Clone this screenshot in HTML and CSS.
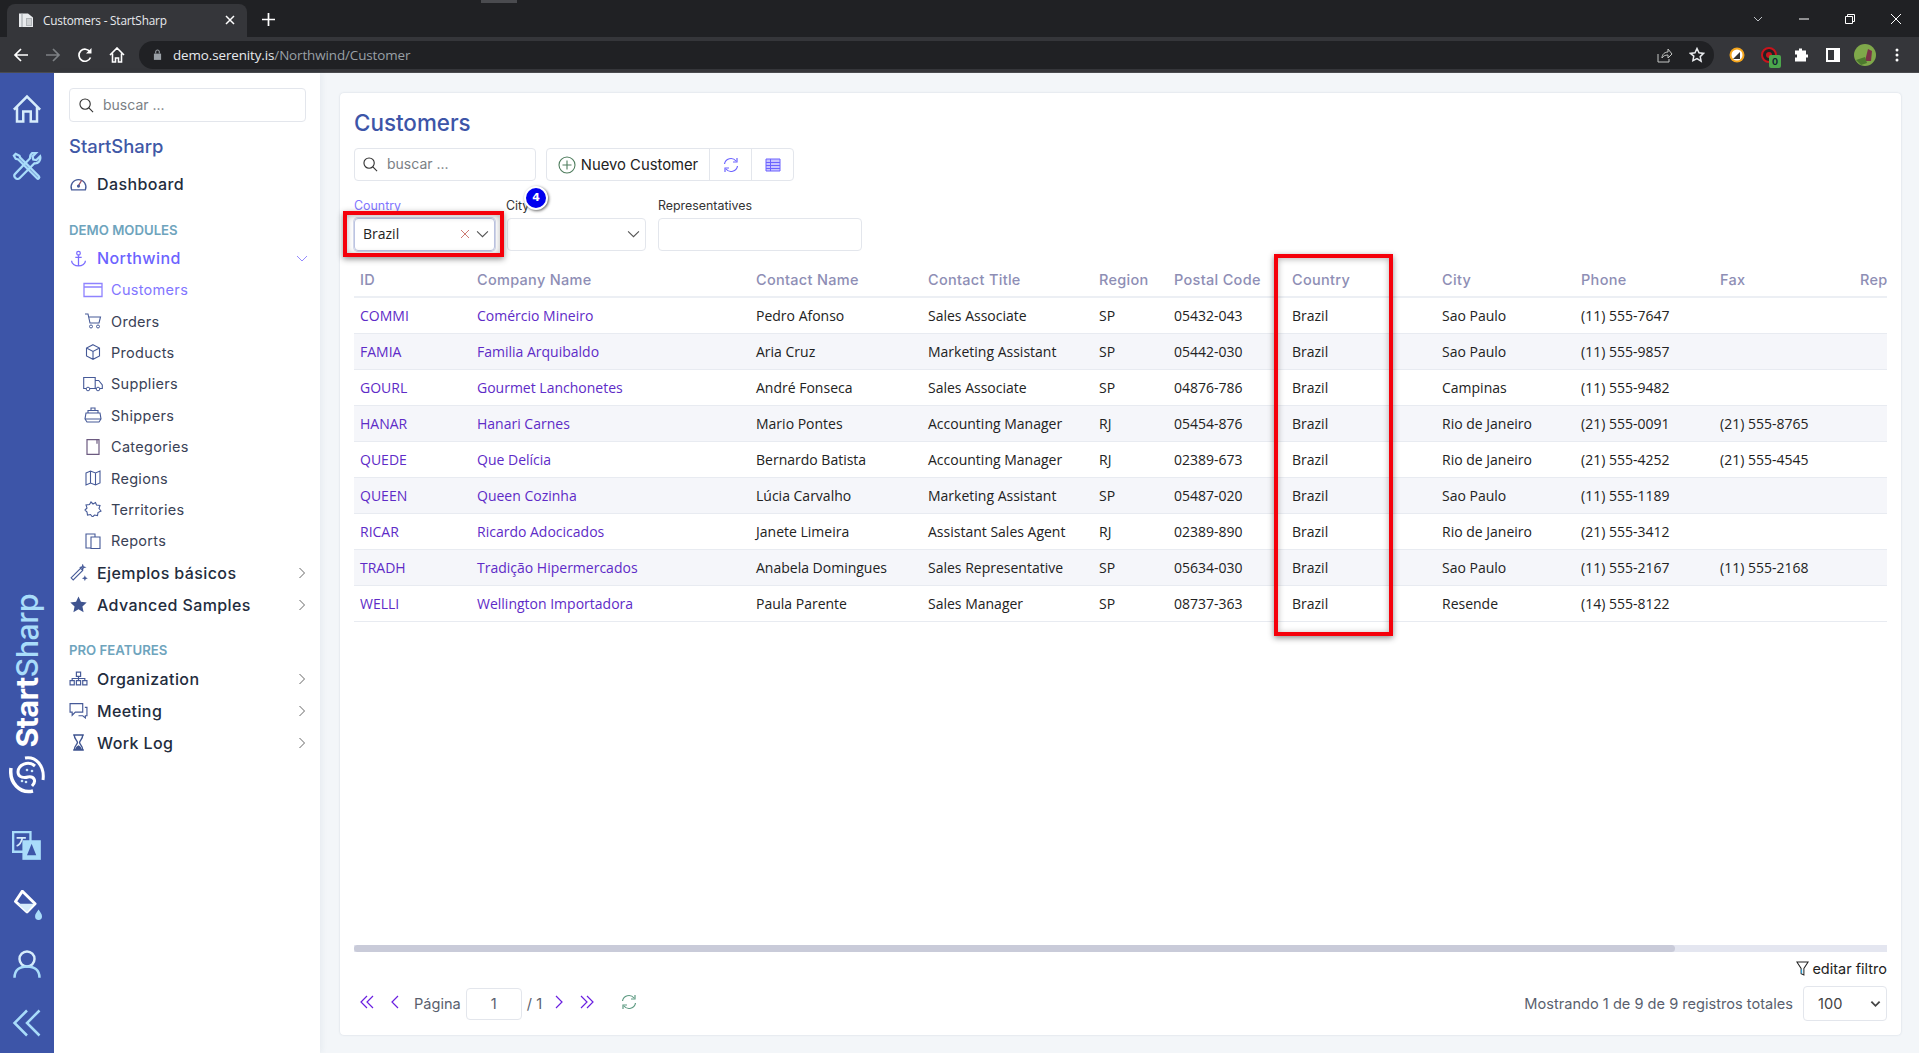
FILE: index.html
```html
<!DOCTYPE html>
<html lang="es">
<head>
<meta charset="utf-8">
<title>Customers - StartSharp</title>
<link rel="stylesheet" href="styles.css">
</head>
<body>
<div class="browser-tabs">
  <div class="tab">
    <svg class="fav" viewBox="0 0 16 16"><path d="M1 1.500h9l5 4V15H1z" fill="#e8eaed"/><path d="M4 1.500v13.500" stroke="#9aa0a6" stroke-width="1"/><path d="M8 6h6v8H8z" fill="#b0b4b8"/><path d="M9 8h4M9 10h4M9 12h4" stroke="#fff" stroke-width=".8"/></svg>
    <span class="tab-title">Customers - StartSharp</span>
    <svg class="tab-x" viewBox="0 0 10 10"><path d="M1 1l8 8M9 1l-8 8" stroke="#fff" stroke-width="1.5"/></svg>
  </div>
  <svg class="tab-plus" viewBox="0 0 12 12"><path d="M6 0v12M0 6h12" stroke="#fff" stroke-width="1.6"/></svg>
  <div class="drag-mark"></div>
  <div class="win-controls">
    <svg viewBox="0 0 12 12"><path d="M2 4l4 4 4-4" fill="none" stroke="#bdc1c6"/></svg>
    <svg viewBox="0 0 12 12"><path d="M1 6h10" stroke="#fff"/></svg>
    <svg viewBox="0 0 12 12"><path d="M1.500 3.500h7v7h-7zM3.500 3.500v-2h7v7h-2" fill="none" stroke="#fff"/></svg>
    <svg viewBox="0 0 12 12"><path d="M1 1l10 10M11 1L1 11" stroke="#fff"/></svg>
  </div>
</div>
<div class="browser-bar">
  <svg class="nav-ic" viewBox="0 0 16 16"><path d="M15 8H2M8 2L2 8l6 6" fill="none" stroke="#fff" stroke-width="1.7"/></svg>
  <svg class="nav-ic" viewBox="0 0 16 16"><path d="M1 8h13M8 2l6 6-6 6" fill="none" stroke="#7d8084" stroke-width="1.7"/></svg>
  <svg class="nav-ic" viewBox="0 0 16 16"><path d="M13.500 10.500A6 6 0 1 1 13 5" fill="none" stroke="#fff" stroke-width="1.7"/><path d="M14.500 1v5.500H9z" fill="#fff"/></svg>
  <svg class="nav-ic" viewBox="0 0 16 16"><path d="M1 8l7-7 7 7M3.500 6.500V15h3v-4h3v4h3V6.500" fill="none" stroke="#fff" stroke-width="1.6"/></svg>
  <div class="omnibox">
    <svg class="lock" viewBox="0 0 10 12"><path d="M1 5h8v7H1z" fill="#9aa0a6"/><path d="M3 5V3a2 2 0 0 1 4 0v2" fill="none" stroke="#9aa0a6" stroke-width="1.2"/></svg>
    <span class="url"><b>demo.serenity.is</b>/Northwind/Customer</span>
    <svg class="omni-ic first" viewBox="0 0 16 16"><path d="M1 7v8h11v-3M5 11c0-4 3-6 6-6V2l4 5-4 4V8c-3 0-5 1-6 3z" fill="none" stroke="#c4c7c5"/></svg>
    <svg class="omni-ic" viewBox="0 0 16 16"><path d="M8 1.500l2 4.300 4.600.6-3.400 3.200.9 4.600L8 11.500l-4.100 2.200.9-4.600L1.400 6.400 6 5.800z" fill="none" stroke="#e8eaed" stroke-width="1.500"/></svg>
  </div>
  <div class="ext-row">
    <svg class="ext" viewBox="0 0 16 16"><circle cx="8" cy="8" r="7.500" fill="#f4a51c"/><circle cx="8" cy="8" r="5.500" fill="#fff"/><path d="M4 12l7-7v7z" fill="#333"/></svg>
    <span class="ext-badged">
      <svg class="ext" viewBox="0 0 16 16"><circle cx="8" cy="8" r="7" fill="#222" stroke="#c9141c" stroke-width="2"/><circle cx="8" cy="8" r="3" fill="#c9141c"/></svg>
      <span class="zero">0</span>
    </span>
    <svg class="ext" viewBox="0 0 16 16"><path d="M6 1.500h3v2h4v4h2v3h-2v4H2v-4h2v-3H2v-4h4z" fill="#fff"/></svg>
    <svg class="ext" viewBox="0 0 16 16"><path d="M1 1h14v14H1z" fill="#fff"/><path d="M3 3h6v10H3z" fill="#35363a"/></svg>
    <svg class="ext avatar" viewBox="0 0 22 22"><circle cx="11" cy="11" r="11" fill="#7fa84a"/><path d="M11 17l3-12 4 2-1 10z" fill="#7b3248"/><path d="M2 16l9-3 2 6-6 2z" fill="#4d7a2e"/></svg>
    <svg class="ext" viewBox="0 0 16 16"><circle cx="8" cy="3" r="1.500" fill="#fff"/><circle cx="8" cy="8" r="1.500" fill="#fff"/><circle cx="8" cy="13" r="1.500" fill="#fff"/></svg>
  </div>
</div>

<div class="app">
  <nav class="rail">
    <svg class="rail-ic" viewBox="0 0 24 24"><path d="M1.500 12.500L12 2l10.500 10.500M4 10.500V22h5v-8h6v8h5V10.500" fill="none" stroke="#d6ecfb" stroke-width="2"/></svg>
    <svg class="rail-ic" viewBox="0 0 24 24"><path d="M3 1.500L1.500 3 3 5.500l2 .5 15 15c1 1 2.500-.5 1.500-1.500L6.500 4.500 6 3z" fill="none" stroke="#a9dcfa" stroke-width="1.800"/><path d="M22.500 3.500l-3 3-2.500-.5-.5-2.500 3-3c-3-.8-5.500 1.500-5 4.500L2.500 17.500c-2 2 1.500 5.500 3.500 3.500L18 9c3 .5 5.300-2.500 4.500-5.500z" fill="none" stroke="#a9dcfa" stroke-width="1.800"/></svg>
    <div class="brand">
      <span class="brand-text"><span class="brand-start">Start</span><span class="brand-sharp">Sharp</span></span>
      <svg class="swirl" viewBox="0 0 36 38">
        <path d="M16 2C26 0 36 9 34 24" fill="none" stroke="#fff" stroke-width="3"/>
        <path d="M2 12C0 27 11 38 24 35" fill="none" stroke="#fff" stroke-width="3.500"/>
        <path d="M26 10C19 4 9 9 9 16c0 6 7 6 10 5 6-1 9 4 4 9" fill="none" stroke="#fff" stroke-width="3"/>
        <circle cx="18" cy="14" r="1.300" fill="#cfe8f8"/><circle cx="23" cy="15" r="1.300" fill="#cfe8f8"/><circle cx="13" cy="25" r="1.300" fill="#cfe8f8"/><circle cx="17" cy="26" r="1.300" fill="#cfe8f8"/>
      </svg>
    </div>
    <div class="rail-bottom">
      <svg class="rail-ic" viewBox="0 0 26 26"><path d="M1 1h15v17H1z" fill="none" stroke="#a9dcfa" stroke-width="2"/><path d="M9 8h16v17H9z" fill="#a9dcfa"/><path d="M17 11l-4 10h8z" fill="#3d55a8"/><path d="M4 6h8M9 6c-1 4-2 6-5 7" fill="none" stroke="#d6ecfb" stroke-width="1.500"/></svg>
      <svg class="rail-ic" viewBox="0 0 26 26"><path d="M9 1l11 11-7 7L3 10z" fill="#3d55a8" stroke="#fff" stroke-width="2.500" stroke-linejoin="round"/><path d="M5 12h14l-6 7z" fill="#d6ecfb"/><path d="M23 17c-2 3-3 4-3 6a3 3 0 0 0 6 0c0-2-1-3-3-6z" fill="#a9dcfa"/></svg>
      <svg class="rail-ic" viewBox="0 0 24 24"><circle cx="12" cy="8" r="6" fill="none" stroke="#d6ecfb" stroke-width="2"/><path d="M2 23c0-6 4-9 10-9s10 3 10 9" fill="none" stroke="#a9dcfa" stroke-width="2"/></svg>
      <svg class="rail-ic" viewBox="0 0 24 24"><path d="M12 2L2 12l10 10M22 2L12 12l10 10" fill="none" stroke="#a9dcfa" stroke-width="2"/></svg>
    </div>
  </nav>

  <aside class="sidebar">
    <div class="search side-search">
      <svg class="search-ic" viewBox="0 0 16 16"><circle cx="6.500" cy="6.500" r="5.500" fill="none" stroke="#333" stroke-width="1.200"/><path d="M10.500 10.500L15 15" stroke="#333" stroke-width="1.200"/></svg>
      <span class="placeholder">buscar ...</span>
    </div>
    <div class="side-title">StartSharp</div>
    <div class="menu-row dash">
      <svg class="m-ic" viewBox="0 0 16 16"><path d="M1.500 13a7 7 0 1 1 13 0z" fill="none" stroke="#465a98" stroke-width="1.200"/><path d="M8 9l3-5" stroke="#a05060" stroke-width="1.200"/><circle cx="8" cy="9.500" r="1.500" fill="#465a98"/></svg>
      <span>Dashboard</span>
    </div>
    <div class="section">DEMO MODULES</div>
    <div class="menu-row active">
      <svg class="m-ic" viewBox="0 0 16 16"><circle cx="8" cy="3" r="1.700" fill="none" stroke="#7a6cff" stroke-width="1.200"/><path d="M8 5v10M5 7h6M1.500 10c0 3 3 5 6.500 5s6.500-2 6.500-5" fill="none" stroke="#7a6cff" stroke-width="1.200"/></svg>
      <span>Northwind</span>
      <svg class="chev" viewBox="0 0 12 12"><path d="M1 4l5 5 5-5" fill="none" stroke="#7a6cff" stroke-width=".8"/></svg>
    </div>
    <ul class="sub">
      <li class="sub-row current"><svg class="s-ic" viewBox="0 0 20 16"><path d="M1 1.500h18v13H1zM1 5h18" fill="none" stroke="#8f83ff" stroke-width="1.300"/></svg><span>Customers</span></li>
      <li class="sub-row"><svg class="s-ic" viewBox="0 0 20 16"><path d="M2 1h3l2 9h9l1.500-6H5.500" fill="none" stroke="#465a98" stroke-width="1.100"/><circle cx="8" cy="13.500" r="1.500" fill="none" stroke="#465a98"/><circle cx="15" cy="13.500" r="1.500" fill="none" stroke="#465a98"/></svg><span>Orders</span></li>
      <li class="sub-row"><svg class="s-ic" viewBox="0 0 20 16"><path d="M10 .7l6.500 3.300v8L10 15.300 3.500 12V4zM3.500 4L10 7.500 16.500 4M10 7.500v7.800" fill="none" stroke="#465a98" stroke-width="1.100"/></svg><span>Products</span></li>
      <li class="sub-row"><svg class="s-ic" viewBox="0 0 20 16"><path d="M3 12.500H.7V1.500h11.500v11H7M12.200 4.500h3.500l3.600 4.500v3.500H17M12.200 12.500h1" fill="none" stroke="#465a98" stroke-width="1.100"/><circle cx="5" cy="13" r="1.800" fill="none" stroke="#465a98"/><circle cx="15" cy="13" r="1.800" fill="none" stroke="#465a98"/></svg><span>Suppliers</span></li>
      <li class="sub-row"><svg class="s-ic" viewBox="0 0 20 16"><path d="M3 6h14l1 6-2 3H4l-2-3zM5 6V3.500h10V6M8 3.500V1h4v2.500M2 12h16" fill="none" stroke="#465a98" stroke-width="1.100"/></svg><span>Shippers</span></li>
      <li class="sub-row"><svg class="s-ic" viewBox="0 0 20 16"><path d="M4 .7h12v14.600H4zM14 .7v4" fill="none" stroke="#6c5a80" stroke-width="1.200"/></svg><span>Categories</span></li>
      <li class="sub-row"><svg class="s-ic" viewBox="0 0 20 16"><path d="M3 3l4.500-2 5 2L17 1v12l-4.500 2-5-2L3 15zM7.500 1v12M12.500 3v12" fill="none" stroke="#465a98" stroke-width="1.100"/></svg><span>Regions</span></li>
      <li class="sub-row"><svg class="s-ic" viewBox="0 0 20 16"><path d="M8 1l2 2 2.500-1.500L13.500 4l3.500.5-1 3L18 10l-3 1.500-.5 3-3-.5-2 2-2-2.500-3 .5-.5-3L2 9l2-2-1-3 3.500-.5z" fill="none" stroke="#465a98" stroke-width="1.100"/></svg><span>Territories</span></li>
      <li class="sub-row"><svg class="s-ic" viewBox="0 0 20 16"><path d="M8 15H3V1h9v2.500M8 4h9v11.500H8z" fill="none" stroke="#465a98" stroke-width="1.100"/></svg><span>Reports</span></li>
    </ul>
    <div class="menu-row"><svg class="m-ic" viewBox="0 0 16 16"><path d="M1 13L10 4l2 2-9 9zM12 1l.5 1.500L14 3l-1.500.5L12 5l-.5-1.500L10 3l1.500-.5zM14 12l.4 1 1 .4-1 .4-.4 1-.4-1-1-.4 1-.4z" fill="none" stroke="#465a98"/></svg><span>Ejemplos básicos</span><svg class="chev" viewBox="0 0 12 12"><path d="M3.500 1l5 5-5 5" fill="none" stroke="#555" stroke-width=".9"/></svg></div>
    <div class="menu-row"><svg class="m-ic" viewBox="0 0 16 16"><path d="M8 .5l2.300 5 5.400.6-4 3.700 1.100 5.400L8 12.500l-4.800 2.700 1.100-5.400-4-3.700 5.400-.6z" fill="#3f5490"/></svg><span>Advanced Samples</span><svg class="chev" viewBox="0 0 12 12"><path d="M3.500 1l5 5-5 5" fill="none" stroke="#555" stroke-width=".9"/></svg></div>
    <div class="section second">PRO FEATURES</div>
    <div class="menu-row"><svg class="m-ic" viewBox="0 0 18 16"><path d="M7 2h4v4H7zM1 10h4v4H1zM7 10h4v4H7zM13 10h4v4h-4zM9 6v4M3 10V8h12v2" fill="none" stroke="#465a98" stroke-width="1.100"/></svg><span>Organization</span><svg class="chev" viewBox="0 0 12 12"><path d="M3.500 1l5 5-5 5" fill="none" stroke="#555" stroke-width=".9"/></svg></div>
    <div class="menu-row"><svg class="m-ic" viewBox="0 0 18 16"><path d="M1 1.500h12v8H6l-3 3v-3H1zM15 5h2v8h-1.500v2L13 13H9" fill="none" stroke="#465a98" stroke-width="1.100"/></svg><span>Meeting</span><svg class="chev" viewBox="0 0 12 12"><path d="M3.500 1l5 5-5 5" fill="none" stroke="#555" stroke-width=".9"/></svg></div>
    <div class="menu-row"><svg class="m-ic" viewBox="0 0 16 16"><path d="M3 1h10M3 15h10M4 1c0 4 3 5 3 7s-3 3-3 7M12 1c0 4-3 5-3 7s3 3 3 7" fill="none" stroke="#3f5490" stroke-width="1.300"/><path d="M4.500 15c1-3 2-3.500 3.500-4.500 1.500 1 2.500 1.500 3.500 4.500z" fill="#3f5490"/></svg><span>Work Log</span><svg class="chev" viewBox="0 0 12 12"><path d="M3.500 1l5 5-5 5" fill="none" stroke="#555" stroke-width=".9"/></svg></div>
  </aside>

  <main class="content">
    <section class="card">
      <h1 class="page-title">Customers</h1>
      <div class="toolbar">
        <div class="search grid-search">
          <svg class="search-ic" viewBox="0 0 16 16"><circle cx="6.500" cy="6.500" r="5.500" fill="none" stroke="#333" stroke-width="1.200"/><path d="M10.500 10.500L15 15" stroke="#333" stroke-width="1.200"/></svg>
          <span class="placeholder">buscar ...</span>
        </div>
        <div class="btn-group">
          <div class="btn btn-new"><svg class="plus-ic" viewBox="0 0 18 18"><circle cx="9" cy="9" r="8" fill="none" stroke="#4f7d5e" stroke-width="1.100"/><path d="M9 4.500v9M4.500 9h9" stroke="#4f7d5e" stroke-width="1.100"/></svg><span>Nuevo Customer</span></div>
          <div class="btn btn-ic"><svg class="tool-ic" viewBox="0 0 16 16"><path d="M1.500 7A6.500 6.500 0 0 1 13 4M14.500 9A6.500 6.500 0 0 1 3 12" fill="none" stroke="#6c63ff" stroke-width="1.200"/><path d="M14 1v4h-4M2 15v-4h4" fill="none" stroke="#6c63ff" stroke-width="1.200"/></svg></div>
          <div class="btn btn-ic"><svg class="tool-ic" viewBox="0 0 16 16"><path d="M1 2h14v12H1z" fill="#c9c4ff" stroke="#6c63ff"/><path d="M1 5.500h14M1 8.500h14M1 11.500h14M5.500 2v12" stroke="#6c63ff"/></svg></div>
        </div>
      </div>
      <div class="filters">
        <div class="filter">
          <label class="f-label f-on">Country</label>
          <div class="select select-on"><span>Brazil</span><svg class="sel-x" viewBox="0 0 10 10"><path d="M1 1l8 8M9 1l-8 8" stroke="#c05a50" stroke-width=".8"/></svg><svg class="sel-chev" viewBox="0 0 12 12"><path d="M1 4l5 5 5-5" fill="none" stroke="#555"/></svg></div>
        </div>
        <div class="filter">
          <label class="f-label">City</label>
          <div class="select"><svg class="sel-chev" viewBox="0 0 12 12"><path d="M1 4l5 5 5-5" fill="none" stroke="#555"/></svg></div>
        </div>
        <div class="filter">
          <label class="f-label">Representatives</label>
          <div class="select"></div>
        </div>
      </div>

      <div class="grid-wrap">
        <table class="grid">
          <colgroup>
            <col class="c1"><col class="c2"><col class="c3"><col class="c4"><col class="c5"><col class="c6"><col class="c7"><col class="c8"><col class="c9"><col class="c10"><col class="c11">
          </colgroup>
          <thead>
            <tr><th>ID</th><th>Company Name</th><th>Contact Name</th><th>Contact Title</th><th>Region</th><th>Postal Code</th><th>Country</th><th>City</th><th>Phone</th><th>Fax</th><th>Rep</th></tr>
          </thead>
          <tbody>
            <tr><td><a>COMMI</a></td><td><a>Comércio Mineiro</a></td><td>Pedro Afonso</td><td>Sales Associate</td><td>SP</td><td>05432-043</td><td>Brazil</td><td>Sao Paulo</td><td>(11) 555-7647</td><td></td><td></td></tr>
            <tr><td><a>FAMIA</a></td><td><a>Familia Arquibaldo</a></td><td>Aria Cruz</td><td>Marketing Assistant</td><td>SP</td><td>05442-030</td><td>Brazil</td><td>Sao Paulo</td><td>(11) 555-9857</td><td></td><td></td></tr>
            <tr><td><a>GOURL</a></td><td><a>Gourmet Lanchonetes</a></td><td>André Fonseca</td><td>Sales Associate</td><td>SP</td><td>04876-786</td><td>Brazil</td><td>Campinas</td><td>(11) 555-9482</td><td></td><td></td></tr>
            <tr><td><a>HANAR</a></td><td><a>Hanari Carnes</a></td><td>Mario Pontes</td><td>Accounting Manager</td><td>RJ</td><td>05454-876</td><td>Brazil</td><td>Rio de Janeiro</td><td>(21) 555-0091</td><td>(21) 555-8765</td><td></td></tr>
            <tr><td><a>QUEDE</a></td><td><a>Que Delícia</a></td><td>Bernardo Batista</td><td>Accounting Manager</td><td>RJ</td><td>02389-673</td><td>Brazil</td><td>Rio de Janeiro</td><td>(21) 555-4252</td><td>(21) 555-4545</td><td></td></tr>
            <tr><td><a>QUEEN</a></td><td><a>Queen Cozinha</a></td><td>Lúcia Carvalho</td><td>Marketing Assistant</td><td>SP</td><td>05487-020</td><td>Brazil</td><td>Sao Paulo</td><td>(11) 555-1189</td><td></td><td></td></tr>
            <tr><td><a>RICAR</a></td><td><a>Ricardo Adocicados</a></td><td>Janete Limeira</td><td>Assistant Sales Agent</td><td>RJ</td><td>02389-890</td><td>Brazil</td><td>Rio de Janeiro</td><td>(21) 555-3412</td><td></td><td></td></tr>
            <tr><td><a>TRADH</a></td><td><a>Tradição Hipermercados</a></td><td>Anabela Domingues</td><td>Sales Representative</td><td>SP</td><td>05634-030</td><td>Brazil</td><td>Sao Paulo</td><td>(11) 555-2167</td><td>(11) 555-2168</td><td></td></tr>
            <tr><td><a>WELLI</a></td><td><a>Wellington Importadora</a></td><td>Paula Parente</td><td>Sales Manager</td><td>SP</td><td>08737-363</td><td>Brazil</td><td>Resende</td><td>(14) 555-8122</td><td></td><td></td></tr>
          </tbody>
        </table>
      </div>

      <div class="hscroll"><div class="hthumb"></div></div>
      <div class="edit-filter">
        <svg class="funnel" viewBox="0 0 14 16"><path d="M1 1h12L8.500 8v7l-3-1.500V8z" fill="none" stroke="#222" stroke-width="1.100"/><path d="M6 9v4" stroke="#2a9fd6" stroke-width="1.200"/></svg>
        <span>editar filtro</span>
      </div>
      <div class="pager">
        <svg class="pg-ic dbl" viewBox="0 0 14 14"><path d="M7 1L1 7l6 6M13 1L7 7l6 6" fill="none" stroke="#6a1fe0" stroke-width="1.200"/></svg>
        <svg class="pg-ic sgl prev" viewBox="0 0 9 14"><path d="M8 1L2 7l6 6" fill="none" stroke="#6a1fe0" stroke-width="1.200"/></svg>
        <span class="pg-label">Página</span>
        <div class="pg-input">1</div>
        <span class="pg-total">/ 1</span>
        <svg class="pg-ic sgl next" viewBox="0 0 9 14"><path d="M1 1l6 6-6 6" fill="none" stroke="#6a1fe0" stroke-width="1.200"/></svg>
        <svg class="pg-ic dbl last" viewBox="0 0 14 14"><path d="M1 1l6 6-6 6M7 1l6 6-6 6" fill="none" stroke="#6a1fe0" stroke-width="1.200"/></svg>
        <svg class="pg-ic refresh" viewBox="0 0 16 16"><path d="M1.500 7A6.500 6.500 0 0 1 13 4M14.500 9A6.500 6.500 0 0 1 3 12" fill="none" stroke="#5d9a82" stroke-width="1.200"/><path d="M14 1v4h-4M2 15v-4h4" fill="none" stroke="#5d9a82" stroke-width="1.200"/></svg>
        <span class="pg-status">Mostrando 1 de 9 de 9 registros totales</span>
        <div class="pg-size"><span>100</span><svg class="size-chev" viewBox="0 0 12 12"><path d="M1.500 4l4.500 4.500L10.500 4" fill="none" stroke="#444" stroke-width="2"/></svg></div>
      </div>

      <div class="mark mark-filter"></div>
      <div class="mark mark-col"></div>
      <div class="badge">4</div>
    </section>
  </main>
</div>
</body>
</html>
```
FILE: styles.css
```css
* { box-sizing: border-box; }
html, body { margin: 0; height: 100%; overflow: hidden; }
body { display: flex; flex-direction: column; height: 1053px; font-family: "Inter", "Noto Sans", sans-serif; background: #f3f6f9; color: #222; }

/* browser chrome */
.browser-tabs { height: 37px; flex: none; background: #202124; display: flex; align-items: flex-end; position: relative; padding-left: 7px; }
.tab { width: 240px; height: 33px; background: #35363a; border-radius: 8px 8px 0 0; display: flex; align-items: center; padding: 0 12px 2px 11px; color: #e8eaed; font-family: "Open Sans", sans-serif; font-size: 11.800px; }
.fav { width: 16px; height: 16px; flex: none; }
.tab-title { margin-left: 9px; flex: 1; letter-spacing: -.2px; }
.tab-x { width: 10px; height: 10px; }
.tab-plus { width: 13px; height: 13px; margin: 0 0 11px 15px; }
.drag-mark { position: absolute; left: 481px; top: 0; width: 36px; height: 3px; background: #4a4b4f; }
.win-controls { margin-left: auto; align-self: center; display: flex; gap: 34px; padding-right: 17px; }
.win-controls svg { width: 12px; height: 12px; }
.browser-bar { height: 36px; flex: none; background: #35363a; border-bottom: 1px solid #4a4b4f; display: flex; align-items: center; padding-left: 13px; gap: 16px; }
.nav-ic { width: 16px; height: 16px; flex: none; }
.omnibox { margin-left: -2px; width: 1575px; height: 28px; flex: none; background: #202124; border-radius: 14px; display: flex; align-items: center; padding: 0 9px 0 14px; }
.lock { width: 9px; height: 11px; flex: none; }
.url { margin-left: 11px; color: #9aa0a6; font-family: "Open Sans", sans-serif; font-size: 13.400px; letter-spacing: -.1px; }
.url b { color: #e8eaed; font-weight: 400; }
.omni-ic { width: 16px; height: 16px; }
.omni-ic.first { margin-left: auto; margin-right: 16px; }
.ext-row { margin-left: -1px; display: flex; align-items: center; gap: 16px; }
.ext { width: 16px; height: 16px; display: block; flex: none; }
.avatar { width: 22px; height: 22px; margin: 0 -3px; }
.ext-badged { position: relative; display: block; }
.zero { position: absolute; left: 8px; top: 8px; width: 12px; height: 13px; border-radius: 2px; background: #4ca64c; color: #123; font-size: 9px; line-height: 13px; text-align: center; font-weight: 700; }

/* app shell */
.app { flex: 1; display: flex; min-height: 0; }
.rail { width: 54px; flex: none; background: #3d55a8; display: flex; flex-direction: column; align-items: center; padding: 21px 0 15px; gap: 28px; }
.rail-ic { width: 30px; height: 30px; flex: none; }
.brand { margin-top: auto; display: flex; flex-direction: column; align-items: center; gap: 8px; }
.brand-text { writing-mode: vertical-rl; transform: rotate(180deg); font-family: "Inter", sans-serif; font-weight: 700; font-size: 30.500px; line-height: 32px; letter-spacing: -.6px; }
.brand-start { color: #fff; }
.brand-sharp { color: #a9dcfa; font-weight: 500; }
.swirl { width: 36px; height: 38px; }
.rail-bottom { display: flex; flex-direction: column; align-items: center; gap: 29px; margin-top: 9px; }

.sidebar { width: 266px; flex: none; background: #fff; box-shadow: 2px 0 6px rgba(40, 60, 100, .06); padding: 15px 14px 0 15px; }
.search { display: flex; align-items: center; background: #fff; border: 1px solid #e3e6ec; border-radius: 4px; }
.side-search { height: 34px; width: 237px; padding-left: 9px; }
.search-ic { width: 15px; height: 15px; flex: none; }
.placeholder { margin: 0 0 2px 9px; color: #7b7f85; font-size: 14px; }
.side-title { height: 28px; margin-top: 10px; line-height: 28px; color: #4058a6; font-size: 18.400px; font-weight: 500; }
.menu-row { display: flex; align-items: center; height: 32px; font-size: 16px; letter-spacing: .4px; color: #232c3d; font-weight: 450; }
.menu-row.dash { margin-top: 8px; }
.menu-row.active { color: #6c63ff; }
.m-ic { width: 19px; height: 17px; flex: none; margin-right: 9px; }
.chev { width: 12px; height: 12px; margin-left: auto; margin-right: -2px; }
.section { height: 18px; margin-top: 21px; margin-bottom: 3px; line-height: 18px; font-size: 13.200px; font-weight: 600; color: #6ea4bd; }
.section.second { margin-bottom: 4px; margin-top: 20px; }
.sub { list-style: none; margin: 0; padding: 0 0 0 14px; }
.sub-row { display: flex; align-items: center; height: 31.400px; font-size: 14.500px; letter-spacing: .3px; color: #3a4256; }
.sub-row.current { color: #8276ff; }
.s-ic { width: 20px; height: 16px; flex: none; margin-right: 8px; }

/* content */
.content { flex: 1; min-width: 0; padding: 20px 18px 18px 20px; }
.card { position: relative; height: 100%; background: #fff; border-radius: 4px; box-shadow: 0 0 2px rgba(40, 60, 100, .18); padding: 15px 14px 14px; display: flex; flex-direction: column; }
.page-title { margin: 0; height: 30px; line-height: 30px; font-size: 22.400px; font-weight: 500; color: #3d55a8; }
.toolbar { display: flex; gap: 10px; margin-top: 10px; height: 33px; }
.grid-search { width: 182px; padding-left: 8px; }
.btn-group { display: flex; border: 1px solid #e3e6ec; border-radius: 4px; }
.btn { display: flex; align-items: center; justify-content: center; border-left: 1px solid #e3e6ec; }
.btn-new { width: 162px; border-left: 0; font-size: 14.800px; color: #222; gap: 5px; white-space: nowrap; }
.plus-ic { width: 18px; height: 18px; flex: none; }
.btn-ic { width: 42px; }
.tool-ic { width: 16px; height: 16px; }
.filters { display: grid; grid-template-columns: 141px 139px 204px; gap: 12px; margin-top: 17px; width: max-content; }
.f-label { display: block; height: 16px; line-height: 16px; margin-bottom: 4px; font-size: 12.400px; color: #333; }
.f-on { color: #8276ff; }
.filter:nth-child(2) .f-label { margin-left: -1px; }
.select { height: 33px; border: 1px solid #e3e6ec; border-radius: 4px; display: flex; align-items: center; justify-content: flex-end; padding: 0 5px 2px 8px; font-family: "Open Sans", sans-serif; font-size: 14px; }
.select span { margin-right: auto; }
.select-on { box-shadow: 0 0 0 1px #d3d8ea; border-color: #bcc4e2; }
.sel-x { width: 10px; height: 10px; margin-right: 6px; }
.sel-chev { width: 13px; height: 13px; }

.grid-wrap { flex: 1; min-height: 0; margin-top: 10px; overflow: hidden; }
.grid { width: 1533px; table-layout: fixed; border-collapse: collapse; }
.c1 { width: 117px; } .c2 { width: 279px; } .c3 { width: 172px; } .c4 { width: 171px; }
.c5 { width: 75px; } .c6 { width: 118px; } .c7 { width: 150px; } .c8 { width: 139px; }
.c9 { width: 139px; } .c10 { width: 140px; } .c11 { width: 33px; }
.grid th { height: 36px; padding: 2px 6px 0; text-align: left; font-weight: 500; font-size: 14.500px; letter-spacing: .3px; color: #8e8eb5; border-bottom: 2px solid #eceff4; white-space: nowrap; overflow: hidden; }
.grid td { height: 36px; padding: 0 6px; font-family: "Open Sans", sans-serif; font-size: 14px; color: #222; border-bottom: 1px solid #e8ebf1; white-space: nowrap; overflow: hidden; }
.grid tbody tr:nth-child(even) td { background: #f5f6fa; }
.grid a { color: #5e2bc7; }

.hscroll { height: 7px; flex: none; background: #e4e6f0; }
.hthumb { width: 1321px; height: 100%; background: #c9cbd9; border-radius: 4px; }
.edit-filter { display: flex; justify-content: flex-end; align-items: center; height: 20px; margin-top: 6px; gap: 3px; font-size: 14.500px; color: #222; }
.funnel { width: 13px; height: 15px; }
.pager { display: flex; align-items: center; height: 35px; margin-top: 8px; font-size: 14.600px; color: #5a5f6e; }
.pg-ic { flex: none; height: 14px; margin-bottom: 4px; }
.dbl { width: 14px; margin-left: 6px; }
.sgl { width: 9px; }
.prev { margin-left: 16px; }
.pg-label { margin-left: 15px; }
.pg-input { width: 56px; height: 32px; margin-left: 5px; border: 1px solid #e3e6ec; border-radius: 4px; display: flex; align-items: center; justify-content: center; }
.pg-total { margin-left: 5px; }
.next { margin-left: 13px; }
.last { margin-left: 16px; margin-right: 27px; }
.dbl.last { margin-left: 16px; }
.refresh { width: 16px; height: 16px; }
.pg-status { margin-left: auto; }
.pg-size { width: 84px; height: 35px; margin-left: 10px; border: 1px solid #e3e6ec; border-radius: 4px; display: flex; align-items: center; justify-content: space-between; padding: 0 5px 0 14px; color: #444; }
.size-chev { width: 11px; height: 11px; }

/* annotations drawn over the screenshot */
.mark { position: absolute; border: 4px solid #f5000a; box-shadow: 0 2px 6px rgba(0, 0, 0, .45), inset 0 1px 6px rgba(0, 0, 0, .3); pointer-events: none; }
.mark-filter { left: 3px; top: 118px; width: 161px; height: 46px; }
.mark-col { left: 934px; top: 161px; width: 119px; height: 382px; }
.badge { position: absolute; left: 184px; top: 93px; width: 24px; height: 24px; border-radius: 50%; background: #0000ee; border: 2px solid #fff; box-shadow: 1px 1px 3px rgba(0, 0, 0, .6); color: #fff; font-family: "DejaVu Sans", sans-serif; font-weight: 700; font-size: 11px; line-height: 20px; text-align: center; }
```
